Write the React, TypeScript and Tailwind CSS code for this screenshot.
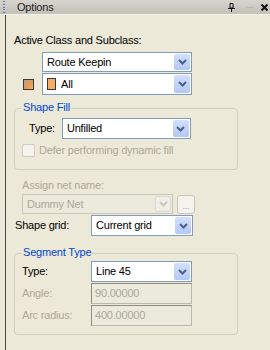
import React from 'react';

const Chevron = ({ color }: { color: string }) => (
  <svg width="9" height="6" viewBox="0 0 9 6">
    <path d="M1 1 L4.5 4.5 L8 1" fill="none" stroke={color} strokeWidth="2" />
  </svg>
);

const Combo = ({
  className,
  children,
  disabled = false,
}: {
  className: string;
  children: React.ReactNode;
  disabled?: boolean;
}) => (
  <div
    className={`flex items-stretch border p-[1px] ${
      disabled ? 'border-[#c9c7ba] bg-[#ebeadb] text-[#aca899]' : 'border-[#7f9db9] bg-white text-black'
    } ${className}`}
  >
    <div className="flex flex-1 items-center gap-[5px] pl-[3px] whitespace-nowrap">{children}</div>
    <div
      className={`flex w-[16px] items-center justify-center rounded-[2px] ${
        disabled ? 'bg-[#f0efe7] border border-[#dcdbd2]' : 'bg-gradient-to-b from-[#d3e0fd] to-[#b3c8f6]'
      }`}
    >
      <Chevron color={disabled ? '#c9c7ba' : '#4d6185'} />
    </div>
  </div>
);

const Field = ({ value }: { value: string }) => (
  <div className="flex h-[21px] w-[101px] items-center border border-t-[#8c8c84] border-l-[#8c8c84] border-r-[#b9b8ae] border-b-[#b9b8ae] bg-[#ebeadb] pl-[3px] text-[#aca899]">
    {value}
  </div>
);

const Group = ({
  label,
  className,
  children,
}: {
  label: string;
  className: string;
  children: React.ReactNode;
}) => (
  <div className={`relative rounded-[4px] border border-[#d0d0bf] ${className}`}>
    <span className="absolute -top-[8px] left-[7px] bg-[#ece9d8] px-[1px] leading-[13px] text-[#0046d5]">
      {label}
    </span>
    {children}
  </div>
);

export default function App() {
  return (
    <div
      className="flex h-[350px] w-[270px] flex-col overflow-hidden bg-[#ece9d8] text-[11px] leading-[13px] tracking-[-0.2px] text-black"
      style={{ fontFamily: '"Liberation Sans", Arial, sans-serif' }}
    >
      {/* Title bar */}
      <div className="flex h-[15px] shrink-0 items-center border-b border-[#f4f3ee] bg-gradient-to-b from-[#d6d4cd] to-[#c3c0b8]">
        <div className="ml-[3px] flex h-[12px] w-[2px] flex-col justify-between">
          {[0, 1, 2, 3, 4].map((i) => (
            <span key={i} className="h-[1px] w-[2px] bg-[#4a73c4]" />
          ))}
        </div>
        <span className="ml-[12px] text-[#1a1a1a]">Options</span>
        <div className="ml-auto flex items-center">
          <svg width="7" height="9" viewBox="0 0 7 9" className="mr-[12px]">
            <path d="M2 0.5 H5 V5 H2 Z" fill="none" stroke="#111" strokeWidth="1" />
            <path d="M0 5.5 H7" stroke="#111" strokeWidth="1" />
            <path d="M3.5 5.5 V9" stroke="#111" strokeWidth="1" />
          </svg>
          <span className="mr-[8px] h-[1px] w-[6px] bg-[#b8b6ae]" />
          <svg width="7" height="7" viewBox="0 0 7 7" className="mr-[2px]">
            <path d="M0.5 0.5 L6.5 6.5 M6.5 0.5 L0.5 6.5" stroke="#111" strokeWidth="2" />
          </svg>
        </div>
      </div>

      {/* Body */}
      <div className="ml-[5px] flex flex-1 flex-col border-l border-[#4a4a4a]">
        <span className="ml-[8px] mt-[19px]">Active Class and Subclass:</span>

        <Combo className="ml-[36px] mt-[5px] h-[20px] w-[150px]">Route Keepin</Combo>

        <div className="mt-[1px] flex items-center">
          <span className="ml-[17px] h-[11px] w-[11px] border border-[#3a3a3a] bg-gradient-to-br from-[#a89f92] via-[#e89a55] to-[#f0ad6c]" />
          <Combo className="ml-[8px] h-[22px] w-[150px]">
            <span className="h-[12px] w-[9px] border border-[#3a3a3a] bg-[#f2ad68]" />
            All
          </Combo>
        </div>

        <Group label="Shape Fill" className="ml-[8px] mt-[13px] h-[62px] w-[224px]">
          <div className="mt-[9px] flex items-center">
            <span className="ml-[14px]">Type:</span>
            <Combo className="ml-[7px] h-[21px] w-[129px]">Unfilled</Combo>
          </div>
          <div className="mt-[5px] flex items-center text-[#aca899]">
            <span className="ml-[7px] h-[13px] w-[13px] rounded-[2px] border border-[#cfcdc2] bg-[#f4f3ee]" />
            <span className="ml-[4px]">Defer performing dynamic fill</span>
          </div>
        </Group>

        <span className="ml-[16px] mt-[9px] text-[#aca899]">Assign net name:</span>

        <div className="mt-[2px] flex items-end">
          <Combo disabled className="ml-[16px] h-[20px] w-[151px]">Dummy Net</Combo>
          <div className="ml-[4px] flex h-[19px] w-[18px] items-end justify-center rounded-[3px] border border-[#c9c7ba] bg-[#f4f3ee] pb-[2px] text-[9px] leading-[9px] text-[#aca899]">
            ...
          </div>
        </div>

        <div className="mt-[1px] flex items-center">
          <span className="ml-[9px] w-[76px]">Shape grid:</span>
          <Combo className="h-[21px] w-[102px]">Current grid</Combo>
        </div>

        <Group label="Segment Type" className="ml-[8px] mt-[17px] h-[82px] w-[224px]">
          <div className="mt-[7px] flex items-center">
            <span className="ml-[7px] w-[69px]">Type:</span>
            <Combo className="h-[21px] w-[101px]">Line 45</Combo>
          </div>
          <div className="mt-[1px] flex items-center text-[#aca899]">
            <span className="ml-[7px] w-[69px]">Angle:</span>
            <Field value="90.00000" />
          </div>
          <div className="mt-[1px] flex items-center text-[#aca899]">
            <span className="ml-[7px] w-[69px]">Arc radius:</span>
            <Field value="400.00000" />
          </div>
        </Group>
      </div>
    </div>
  );
}
